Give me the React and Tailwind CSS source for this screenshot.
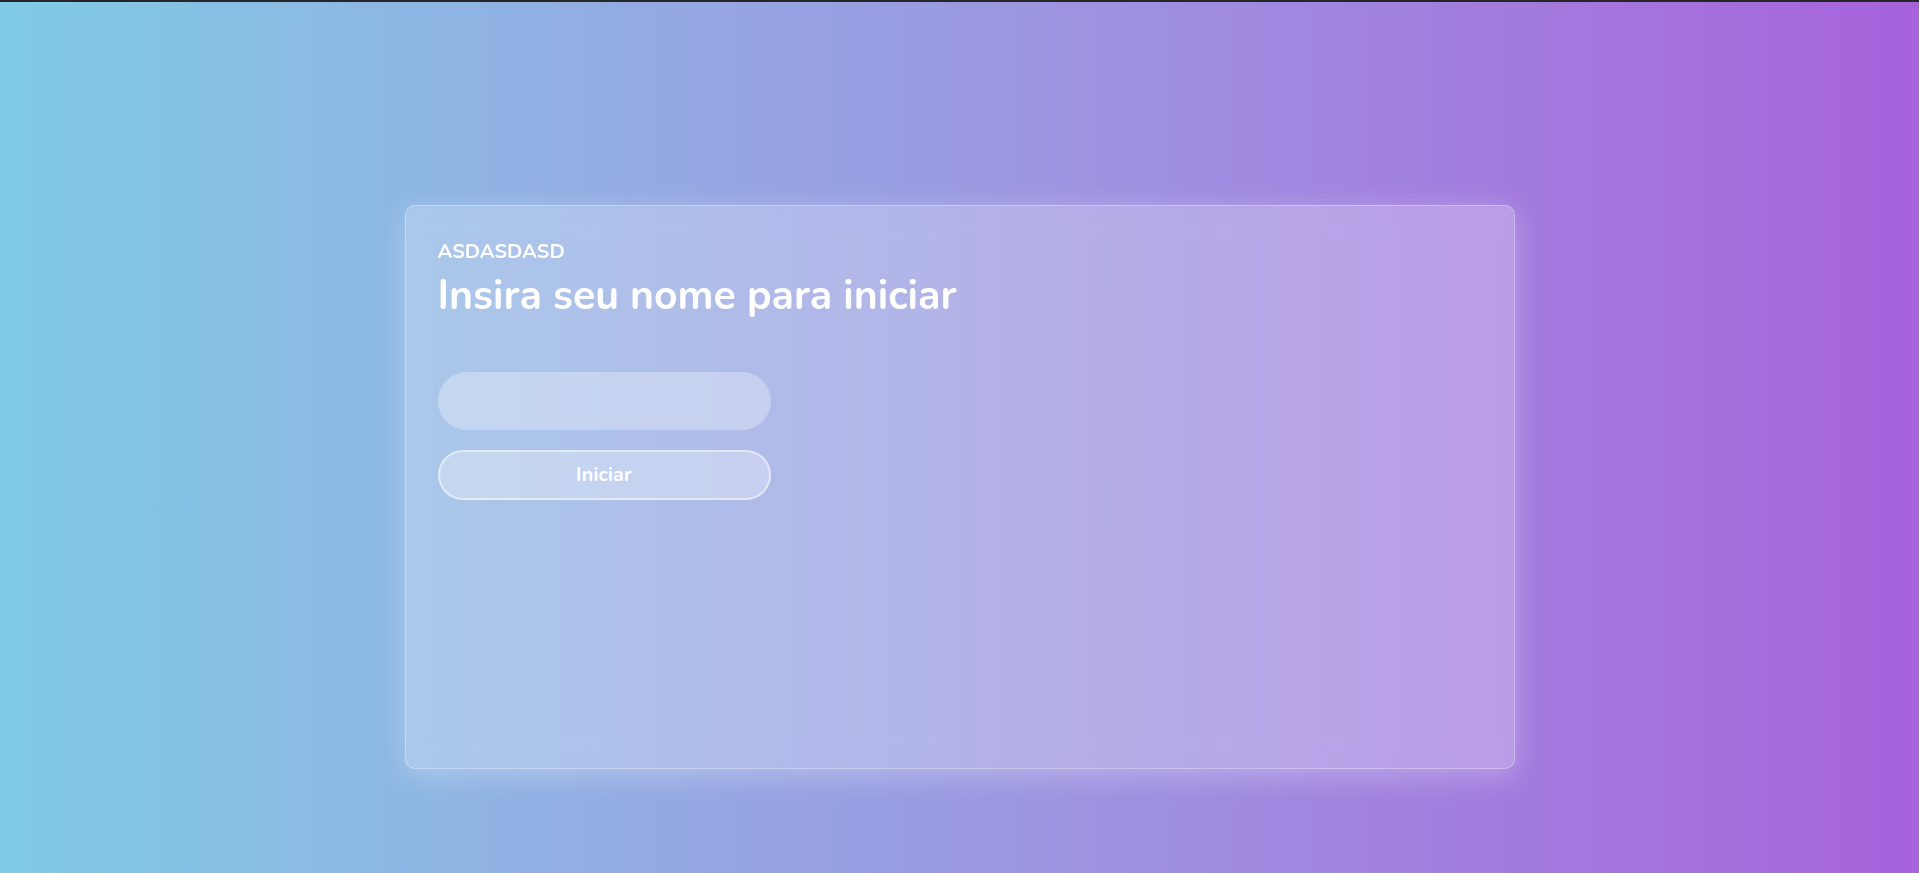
import { useState } from 'react';

// Tela inicial: cartão de vidro sobre gradiente, pede o nome do jogador
const App = () => {
  const [nome, setNome] = useState('');

  return (
    <div
      className="min-h-screen w-full bg-gradient-to-r from-[#7ecbe5] to-[#a662db] border-t-2 border-[#262626]"
      style={{ fontFamily: 'Nunito, Lato, "Noto Sans", sans-serif' }}
    >
      <div className="flex justify-center pt-[203px] pb-[104px]">
        <div className="w-[1110px] h-[564px] rounded-[10px] border border-white/30 bg-white/25 backdrop-blur-md shadow-[0_6px_30px_rgba(255,255,255,0.3)] px-8 pt-[33px]">
          <h3 className="text-[20px] leading-[26px] font-bold text-white">ASDASDASD</h3>
          <h1 className="mt-[4px] text-[41px] leading-[54px] font-bold text-white">
            Insira seu nome para iniciar
          </h1>

          <div className="mt-[49px] flex flex-col gap-[20px] w-[333px]">
            <input
              type="text"
              value={nome}
              onChange={(e) => setNome(e.target.value)}
              className="h-[58px] w-full rounded-full bg-white/30 px-6 text-white text-lg outline-none"
            />
            <button className="h-[50px] w-full rounded-full bg-white/30 border-2 border-white/50 text-white text-[20px] font-bold">
              Iniciar
            </button>
          </div>
        </div>
      </div>
    </div>
  );
};

export default App;
